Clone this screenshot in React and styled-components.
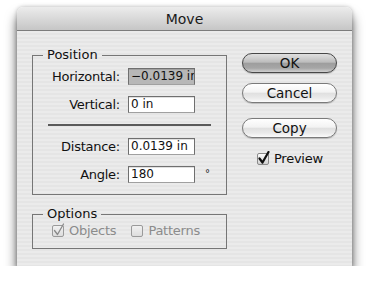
import React from 'react';
import styled, { createGlobalStyle } from 'styled-components';

const GlobalStyle = createGlobalStyle`
  body {
    margin: 0;
    background: #ffffff;
    font-family: "DejaVu Sans", "Liberation Sans", sans-serif;
  }
`;

// Sheet window
const Window = styled.div`
  margin: 7px 0 0 17px;
  width: 335px;
  height: 259px;
  display: flex;
  flex-direction: column;
  border-radius: 6px 6px 0 0;
  box-shadow: 0 9px 12px rgba(0, 0, 0, 0.65), 0 0 4px rgba(0, 0, 0, 0.25);
`;

const TitleBar = styled.div`
  box-sizing: border-box;
  height: 24px;
  display: flex;
  align-items: center;
  justify-content: center;
  font-size: 14px;
  color: #1a1a1a;
  border-radius: 6px 6px 0 0;
  border-bottom: 1px solid #7c7c7c;
  background: linear-gradient(#ececec, #d9d9d9 50%, #c6c6c6);
`;

const Body = styled.div`
  flex: 1;
  display: flex;
  gap: 15px;
  padding: 16px 15px 0;
  background: repeating-linear-gradient(#ebebeb 0 2px, #e5e5e5 2px 4px);
`;

const LeftColumn = styled.div`
  width: 195px;
  display: flex;
  flex-direction: column;
  gap: 11px;
`;

const Group = styled.fieldset`
  margin: 0;
  padding: ${p => p.$pad};
  border: 1px solid #767676;
  min-width: 0;
`;

const Legend = styled.legend`
  margin-left: 10px;
  padding: 0 4px;
  font-size: 13px;
  line-height: 16px;
  color: #111;
`;

const Rows = styled.div`
  display: flex;
  flex-direction: column;
  gap: 12px;
`;

const Row = styled.div`
  display: grid;
  grid-template-columns: 87px 67px auto;
  column-gap: 8px;
  align-items: center;
  height: 16px;
`;

const Label = styled.span`
  text-align: right;
  font-size: 13px;
  letter-spacing: -0.25px;
  color: #111;
  white-space: nowrap;
`;

const Field = styled.div`
  box-sizing: border-box;
  height: 17px;
  padding: 0 2px;
  border: 1px solid #6f6f6f;
  border-bottom-color: #a0a0a0;
  background: ${p => (p.$selected ? '#b7b7b7' : '#ffffff')};
  box-shadow: inset 0 1px 0 rgba(0, 0, 0, 0.12);
  font-size: 12px;
  line-height: 15px;
  color: #111;
  white-space: nowrap;
  overflow: hidden;
`;

const Unit = styled.span`
  align-self: start;
  margin: 2px 0 0 2px;
  font-size: 10px;
  color: #222;
`;

const Separator = styled.div`
  height: 2px;
  margin: 0 15px;
  background: #5a5a5a;
`;

const CheckRow = styled.div`
  display: flex;
  align-items: center;
  gap: 14px;
  padding-left: 18px;
`;

const Check = styled.label`
  display: flex;
  align-items: center;
  gap: 3px;
  font-size: 13px;
  letter-spacing: -0.25px;
  color: ${p => (p.$disabled ? '#8c8c8c' : '#111')};
`;

const RightColumn = styled.div`
  width: 95px;
  display: flex;
  flex-direction: column;
  padding-top: 6px;
`;

const Button = styled.button`
  box-sizing: border-box;
  width: 95px;
  height: 20px;
  margin-top: ${p => p.$gap}px;
  padding: 0;
  border-radius: 10px;
  border: 1px solid ${p => (p.$default ? '#474747' : '#7a7a7a')};
  background: ${p =>
    p.$default
      ? 'linear-gradient(#e0e0e0 0%, #bdbdbd 45%, #9e9e9e 52%, #a6a6a6 78%, #cfcfcf 100%)'
      : 'linear-gradient(#ffffff 0%, #f3f3f3 45%, #e0e0e0 52%, #eaeaea 78%, #fbfbfb 100%)'};
  box-shadow: 0 1px 1px rgba(0, 0, 0, 0.2);
  font-family: inherit;
  font-size: 13.5px;
  line-height: 18px;
  color: #111;
`;

const Preview = styled(Check)`
  margin-top: 13px;
  padding-left: 14px;
`;

const CheckBox = ({ checked, disabled }) => {
  const stroke = disabled ? '#9a9a9a' : '#8a8a8a';
  const mark = disabled ? '#8a8a8a' : '#111';
  const id = disabled ? 'cbd' : 'cbe';
  return (
    <svg width="15" height="15" viewBox="0 0 15 15">
      <defs>
        <linearGradient id={id} x1="0" y1="0" x2="0" y2="1">
          <stop offset="0" stopColor={disabled ? '#f2f2f2' : '#ffffff'} />
          <stop offset="1" stopColor={disabled ? '#dcdcdc' : '#cfcfcf'} />
        </linearGradient>
      </defs>
      <rect x="1.5" y="2.5" width="11" height="11" rx="1.5" fill={`url(#${id})`} stroke={stroke} />
      {checked && (
        <path d="M3.5 7.5 L6.5 11.5 L12.5 1" fill="none" stroke={mark}
          strokeWidth={disabled ? 1.3 : 2.2} strokeLinecap="round" strokeLinejoin="round" />
      )}
    </svg>
  );
};

const App = () => (
  <>
    <GlobalStyle />
    <Window>
      <TitleBar>Move</TitleBar>
      <Body>
        <LeftColumn>
          <Group $pad="5px 0 12px">
            <Legend>Position</Legend>
            <Rows>
              <Row>
                <Label>Horizontal:</Label>
                <Field $selected>−0.0139 in</Field>
              </Row>
              <Row>
                <Label>Vertical:</Label>
                <Field>0 in</Field>
              </Row>
              <Separator />
              <Row>
                <Label>Distance:</Label>
                <Field>0.0139 in</Field>
              </Row>
              <Row>
                <Label>Angle:</Label>
                <Field>180</Field>
                <Unit>°</Unit>
              </Row>
            </Rows>
          </Group>
          <Group $pad="1px 0 10px">
            <Legend>Options</Legend>
            <CheckRow>
              <Check $disabled>
                <CheckBox checked disabled />
                Objects
              </Check>
              <Check $disabled>
                <CheckBox disabled />
                Patterns
              </Check>
            </CheckRow>
          </Group>
        </LeftColumn>
        <RightColumn>
          <Button $default $gap={0}>OK</Button>
          <Button $gap={10}>Cancel</Button>
          <Button $gap={15}>Copy</Button>
          <Preview>
            <CheckBox checked />
            Preview
          </Preview>
        </RightColumn>
      </Body>
    </Window>
  </>
);

export default App;
